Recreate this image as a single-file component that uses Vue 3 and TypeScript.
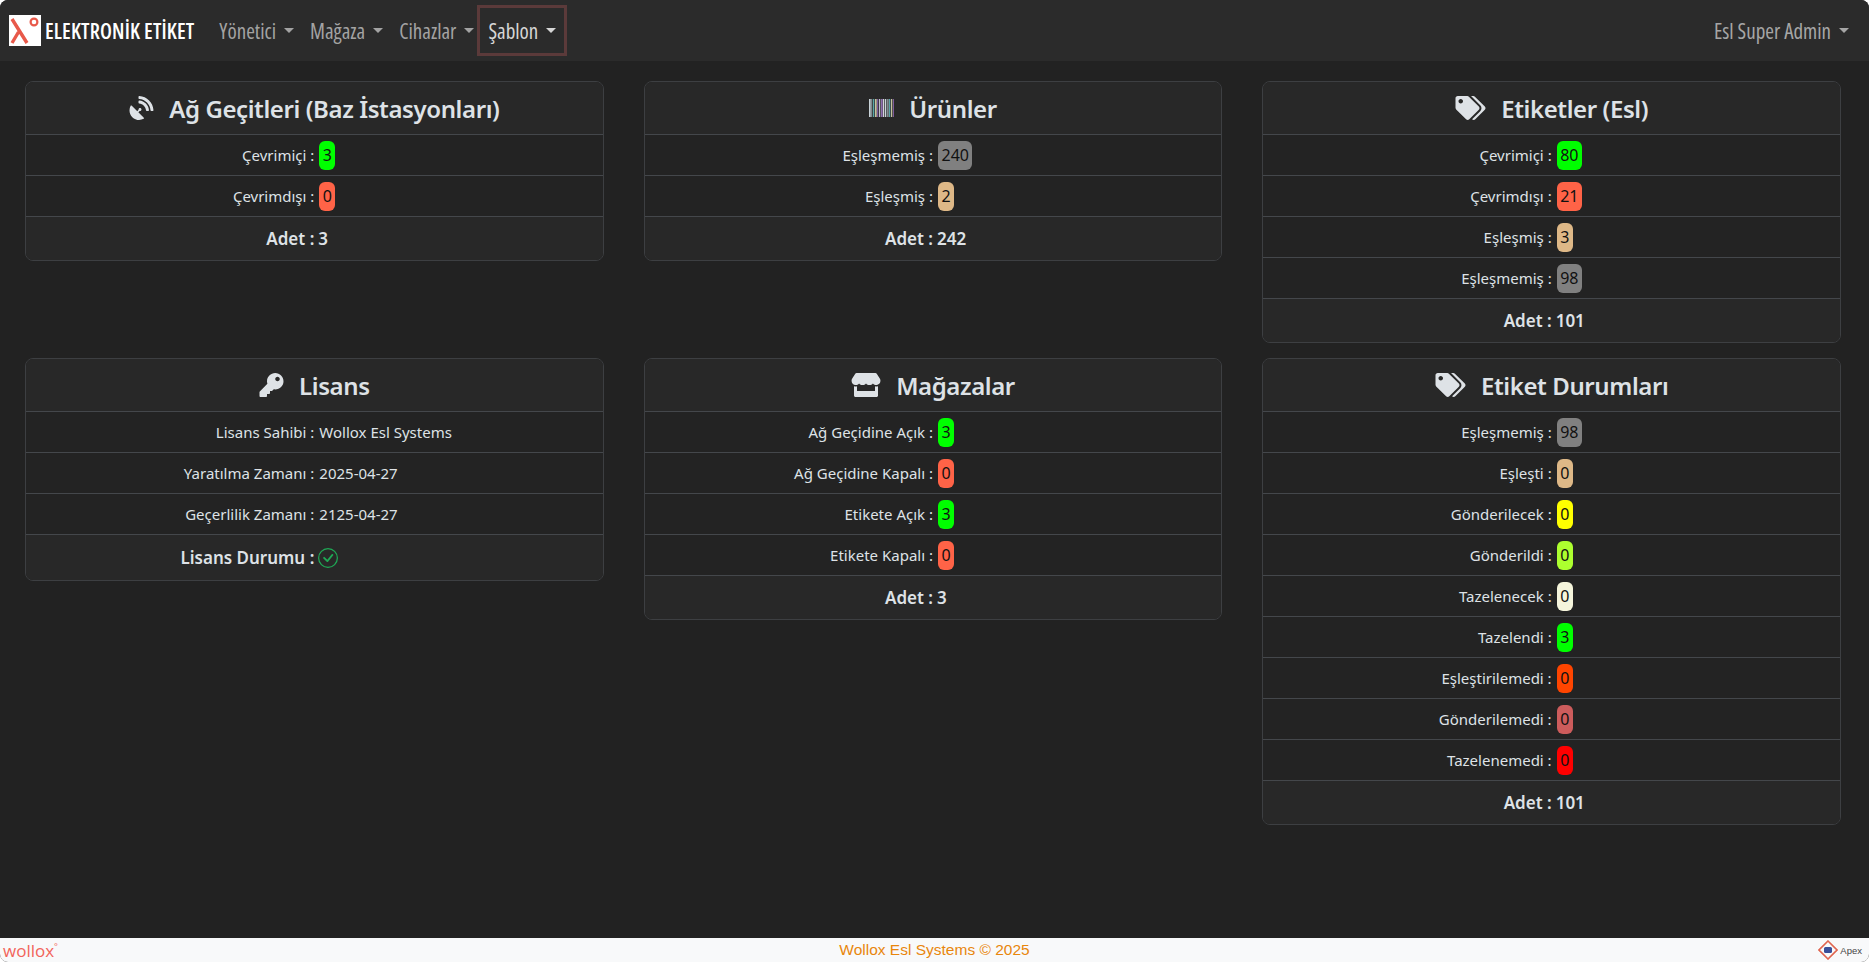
<template>
  <div class="page">
    <nav class="navbar">
      <a class="brand">
        <svg class="logo" viewBox="0 0 32 31">
          <rect width="32" height="31" fill="#fff" />
          <path d="M3 4l15 24M3 28l6.500-11" fill="none" stroke="#e8594a" stroke-width="3.400" />
          <circle cx="25" cy="7" r="3.400" fill="none" stroke="#e8594a" stroke-width="2.200" />
        </svg>
        <span>ELEKTRONİK ETİKET</span>
      </a>
      <ul class="menu">
        <li v-for="item in menuItems" :key="item" class="menu-item" :class="{ active: item === 'Şablon' }">
          {{ item }}<i class="caret"></i>
        </li>
      </ul>
      <div class="user">Esl Super Admin<i class="caret"></i></div>
    </nav>

    <main class="content">
      <section v-for="card in cards" :key="card.title" class="card">
        <header class="card-head">
          <svg v-if="card.icon === 'barcode'" class="icon barcode" viewBox="0 0 25 18">
            <rect
              v-for="(bar, i) in barcodeBars"
              :key="i"
              :x="bar.x"
              y="0"
              :width="bar.w"
              height="18"
              :fill="bar.color"
            />
          </svg>
          <svg v-else class="icon" :viewBox="icons[card.icon].box" :style="{ width: icons[card.icon].width + 'px' }">
            <path :d="icons[card.icon].d" fill="#dee2e6" />
          </svg>
          <h2>{{ card.title }}</h2>
        </header>

        <div v-for="row in card.rows" :key="row.label" class="row">
          <span class="label">{{ row.label }} :</span>
          <span class="value">
            <b v-if="row.color" class="badge" :style="{ background: row.color }">{{ row.value }}</b>
            <template v-else>{{ row.value }}</template>
          </span>
        </div>

        <footer v-if="card.total" class="row foot">
          <span class="label">Adet :</span>
          <span class="value">{{ card.total }}</span>
        </footer>
        <footer v-else class="row foot tall">
          <span class="label">Lisans Durumu :</span>
          <span class="value">
            <svg class="check" viewBox="0 0 16 16" fill="#1fa855">
              <path d="M8 15A7 7 0 1 1 8 1a7 7 0 0 1 0 14zm0 1A8 8 0 1 0 8 0a8 8 0 0 0 0 16z" />
              <path d="M10.970 4.970a.235.235 0 0 0-.02.022L7.477 9.417 5.384 7.323a.75.75 0 0 0-1.060 1.060L6.970 11.030a.75.75 0 0 0 1.079-.02l3.992-4.990a.75.75 0 0 0-1.071-1.050z" />
            </svg>
          </span>
        </footer>
      </section>
    </main>

    <footer class="page-foot">
      <span class="wollox">wollox<sup>°</sup></span>
      <span class="copy">Wollox Esl Systems © 2025</span>
      <span class="apex">
        <svg viewBox="0 0 20 20" class="apex-mark">
          <path d="M10 1l9 9-9 9-9-9z" fill="none" stroke="#e0654f" stroke-width="1.600" />
          <rect x="6" y="7" width="8" height="6" rx="1.500" fill="#3a4f9a" />
        </svg>
        Apex
      </span>
    </footer>
  </div>
</template>

<script setup lang="ts">
interface Row {
  label: string
  value: string | number
  color?: string
}

interface Card {
  title: string
  icon: string
  rows: Row[]
  total?: number
}

const LIME = '#00ff00'
const TOMATO = '#ff6347'
const TAN = '#deb887'
const GRAY = '#808080'

const menuItems = ['Yönetici', 'Mağaza', 'Cihazlar', 'Şablon']

const icons: Record<string, { box: string; width: number; d: string }> = {
  dish: {
    box: '0 0 512 512',
    width: 25,
    d: 'M188.8 345.9l27.4-27.4c2.600.7 5 1.600 7.800 1.600 17.700 0 32-14.300 32-32s-14.300-32-32-32-32 14.300-32 32c0 2.800.9 5.200 1.600 7.800l-27.400 27.400L49.400 206.500c-7.300-7.300-20.100-6.100-25 3-41.800 77.800-29.900 176.700 35.700 242.300 65.600 65.600 164.600 77.500 242.300 35.700 9.200-4.900 10.400-17.700 3-25L188.800 345.900zM209 0c-9.200-.5-17 6.800-17 16v31.600c0 8.500 6.600 15.500 15 15.900 129.400 7 233.400 112 240.900 241.500.5 8.400 7.500 15 15.900 15h32.100c9.200 0 16.500-7.800 16-17C503.400 139.800 372.200 8.600 209 0zm.3 96c-9.300-.7-17.300 6.700-17.300 16.100v32.100c0 8.400 6.500 15.300 14.800 15.900 76.800 6.300 138 68.200 144.900 145.200.8 8.300 7.600 14.700 15.900 14.700h32.200c9.300 0 16.800-8 16.100-17.300-8.400-110.100-96.500-198.200-206.600-206.700z',
  },
  tags: {
    box: '0 0 640 512',
    width: 31,
    d: 'M497.941 225.941L286.059 14.059A48 48 0 0 0 252.118 0H48C21.490 0 0 21.490 0 48v204.118a48 48 0 0 0 14.059 33.941l211.882 211.882c18.744 18.745 49.136 18.746 67.882 0l204.118-204.118c18.745-18.745 18.745-49.137 0-67.882zM112 160c-26.510 0-48-21.490-48-48s21.490-48 48-48 48 21.490 48 48-21.490 48-48 48zm513.941 133.823L421.823 497.941c-18.745 18.745-49.137 18.745-67.882 0l-.36-.36L527.640 323.522c16.999-16.999 26.360-39.600 26.360-63.640s-9.362-46.641-26.360-63.640L331.397 0h48.721a48 48 0 0 1 33.941 14.059l211.882 211.882c18.745 18.745 18.745 49.137 0 67.882z',
  },
  key: {
    box: '0 0 512 512',
    width: 25,
    d: 'M512 176.001C512 273.203 433.202 352 336 352c-11.220 0-22.190-1.062-32.827-3.069l-24.012 27.014A23.999 23.999 0 0 1 261.223 384H224v40c0 13.255-10.745 24-24 24h-40v40c0 13.255-10.745 24-24 24H24c-13.255 0-24-10.745-24-24v-78.059c0-6.365 2.529-12.470 7.029-16.971l161.802-161.802C163.108 213.814 160 195.271 160 176 160 78.798 238.797.001 335.999 0 433.488-.001 512 78.511 512 176.001zM336 128c0 26.510 21.490 48 48 48s48-21.490 48-48-21.490-48-48-48-48 21.490-48 48z',
  },
  store: {
    box: '0 0 616 512',
    width: 30,
    d: 'M602 118.600L537.100 15C531.300 5.700 521 0 510 0H106C95 0 84.700 5.700 78.900 15L14 118.600C-19.500 172.100 10.200 246.500 72.900 255c4.500.6 9.100.9 13.700.9 29.600 0 55.800-13 73.800-33.100 18 20.100 44.300 33.100 73.800 33.100 29.600 0 55.800-13 73.800-33.100 18 20.100 44.300 33.100 73.800 33.100 29.600 0 55.800-13 73.800-33.100 18.100 20.100 44.300 33.100 73.800 33.100 4.700 0 9.200-.3 13.700-.9 62.900-8.400 92.700-82.800 59.100-136.400zM529.500 288c-10 0-19.900-1.500-29.500-3.800V384H116v-99.800c-9.600 2.200-19.500 3.800-29.500 3.800-6 0-12.100-.4-18-1.200-5.600-.8-11.100-2.100-16.400-3.600V480c0 17.700 14.300 32 32 32h448c17.700 0 32-14.300 32-32V283.200c-5.400 1.600-10.800 2.900-16.400 3.600-6.100.8-12.100 1.200-18.200 1.200z',
  },
}

// stripes of the barcode glyph, thin enough to look tinted at this size
const barcodeColors = ['#c9d3d8', '#7f8a90', '#5aa7a8', '#c8c0a0', '#7d5b9c', '#b9c0c8', '#8f6fae', '#d0d4d8']
const barcodeBars = Array.from({ length: 13 }, (_, i) => ({
  x: i * 2,
  w: i % 3 === 0 ? 1.700 : 1.300,
  color: barcodeColors[i % barcodeColors.length],
}))

const cards: Card[] = [
  {
    title: 'Ağ Geçitleri (Baz İstasyonları)',
    icon: 'dish',
    rows: [
      { label: 'Çevrimiçi', value: 3, color: LIME },
      { label: 'Çevrimdışı', value: 0, color: TOMATO },
    ],
    total: 3,
  },
  {
    title: 'Ürünler',
    icon: 'barcode',
    rows: [
      { label: 'Eşleşmemiş', value: 240, color: GRAY },
      { label: 'Eşleşmiş', value: 2, color: TAN },
    ],
    total: 242,
  },
  {
    title: 'Etiketler (Esl)',
    icon: 'tags',
    rows: [
      { label: 'Çevrimiçi', value: 80, color: LIME },
      { label: 'Çevrimdışı', value: 21, color: TOMATO },
      { label: 'Eşleşmiş', value: 3, color: TAN },
      { label: 'Eşleşmemiş', value: 98, color: GRAY },
    ],
    total: 101,
  },
  {
    title: 'Lisans',
    icon: 'key',
    rows: [
      { label: 'Lisans Sahibi', value: 'Wollox Esl Systems' },
      { label: 'Yaratılma Zamanı', value: '2025-04-27' },
      { label: 'Geçerlilik Zamanı', value: '2125-04-27' },
    ],
  },
  {
    title: 'Mağazalar',
    icon: 'store',
    rows: [
      { label: 'Ağ Geçidine Açık', value: 3, color: LIME },
      { label: 'Ağ Geçidine Kapalı', value: 0, color: TOMATO },
      { label: 'Etikete Açık', value: 3, color: LIME },
      { label: 'Etikete Kapalı', value: 0, color: TOMATO },
    ],
    total: 3,
  },
  {
    title: 'Etiket Durumları',
    icon: 'tags',
    rows: [
      { label: 'Eşleşmemiş', value: 98, color: GRAY },
      { label: 'Eşleşti', value: 0, color: TAN },
      { label: 'Gönderilecek', value: 0, color: '#ffff00' },
      { label: 'Gönderildi', value: 0, color: '#adff2f' },
      { label: 'Tazelenecek', value: 0, color: '#f5f5dc' },
      { label: 'Tazelendi', value: 3, color: LIME },
      { label: 'Eşleştirilemedi', value: 0, color: '#ff4500' },
      { label: 'Gönderilemedi', value: 0, color: '#cd5c5c' },
      { label: 'Tazelenemedi', value: 0, color: '#ff0000' },
    ],
    total: 101,
  },
]
</script>

<style>
html,
body {
  margin: 0;
  background: #fff;
  overflow: hidden;
}
</style>

<style scoped>
.page {
  height: 962px;
  display: flex;
  flex-direction: column;
  background: #222;
  border-radius: 8px;
  overflow: hidden;
  font-family: "Noto Sans", "Open Sans", sans-serif;
  color: #dee2e6;
}

.navbar {
  height: 61px;
  flex: none;
  display: flex;
  align-items: center;
  padding: 0 20px 0 9px;
  background: #2b2b2b;
  font-family: "Open Sans", sans-serif;
  font-stretch: 75%;
  font-size: 21px;
}

.brand {
  display: flex;
  align-items: center;
  gap: 4px;
  margin-right: 17px;
  color: #fff;
  font-weight: 600;
  letter-spacing: 0.15px;
}

.logo {
  width: 32px;
  height: 31px;
}

.menu {
  display: flex;
  list-style: none;
  margin: 0;
  padding: 0;
}

.menu-item {
  padding: 0 8px;
  height: 51px;
  display: flex;
  align-items: center;
  color: #a3a3a3;
  box-sizing: border-box;
  white-space: nowrap;
}

.menu-item.active {
  margin-left: -5px;
  color: #d6d6d6;
  border: 3px solid #5b3a3a;
}

.user {
  margin-left: auto;
  color: #a6a6a6;
  display: flex;
  align-items: center;
}

.caret {
  display: inline-block;
  margin-left: 8px;
  border-top: 5px solid currentColor;
  border-left: 5px solid transparent;
  border-right: 5px solid transparent;
}

.content {
  flex: 1;
  display: grid;
  grid-template-columns: repeat(3, 1fr);
  gap: 15.5px 40px;
  align-items: start;
  align-content: start;
  padding: 20px 28px 0 25px;
}

.card {
  border: 1px solid #3d3f42;
  border-radius: 8px;
  overflow: hidden;
  background: #232323;
}

.card-head {
  height: 52px;
  display: flex;
  align-items: center;
  justify-content: center;
  gap: 15px;
  background: #282828;
}

.card-head h2 {
  margin: 0;
  font-size: 24px;
  font-weight: 600;
  letter-spacing: -0.4px;
}

.icon {
  height: 24px;
  flex: none;
}

.barcode {
  width: 25px;
  height: 18px;
}

.row {
  display: flex;
  align-items: center;
  height: 40px;
  border-top: 1px solid #44474b;
  font-size: 15px;
}

.label {
  width: 50%;
  text-align: right;
  white-space: nowrap;
}

.value {
  padding-left: 5px;
  display: flex;
  align-items: center;
  white-space: nowrap;
}

.badge {
  height: 29px;
  line-height: 29px;
  padding: 0 3.5px;
  border-radius: 6px;
  color: #111;
  font-weight: 400;
  font-size: 16px;
}

.foot {
  height: 42.5px;
  background: #282828;
  font-size: 17px;
  font-weight: 600;
}

.foot.tall {
  height: 45px;
}

.foot .value {
  padding-left: 4px;
}

.check {
  width: 20px;
  height: 20px;
}

.page-foot {
  height: 24px;
  flex: none;
  display: grid;
  grid-template-columns: 1fr auto 1fr;
  align-items: center;
  background: #f8f9fa;
  padding: 0 3px;
}

.wollox {
  color: #f2645a;
  font-size: 17px;
  font-family: "Open Sans", sans-serif;
  font-weight: 400;
}

.wollox sup {
  font-size: 9px;
  line-height: 0;
}

.copy {
  color: #e8860c;
  font-size: 15.5px;
  font-family: "Liberation Sans", sans-serif;
}

.apex {
  justify-self: end;
  display: flex;
  align-items: center;
  gap: 2px;
  padding-right: 4px;
  font-size: 9.5px;
  color: #444;
  font-family: "Liberation Sans", sans-serif;
}

.apex-mark {
  width: 20px;
  height: 20px;
}
</style>
